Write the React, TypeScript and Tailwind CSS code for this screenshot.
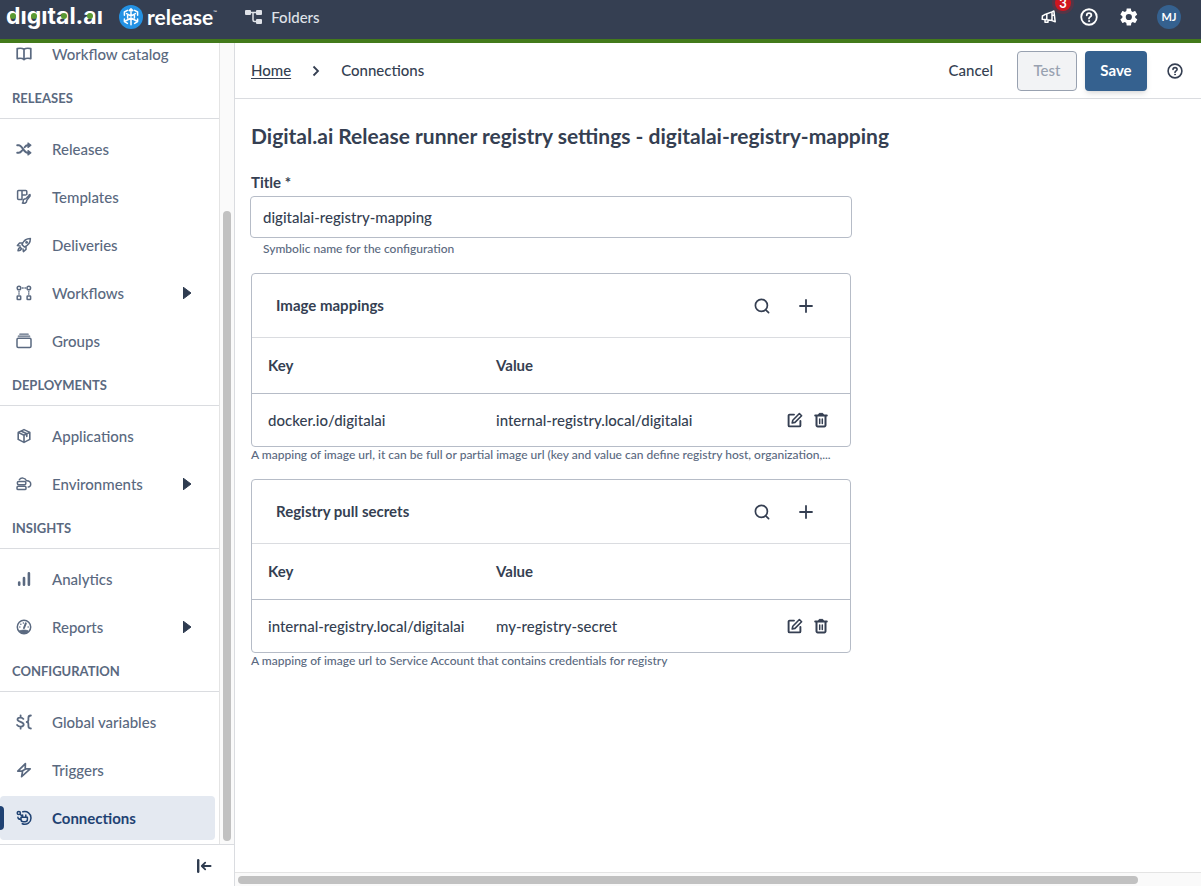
import { useState } from 'react'
import type { ReactNode } from 'react'

interface NavItem {
  label: string
  icon: ReactNode
  expandable?: boolean
  active?: boolean
}

interface NavSection {
  title?: string
  items: NavItem[]
}

interface MappingRow {
  key: string
  value: string
}

function Icon({ children, size = 'h-4 w-4' }: { children: ReactNode; size?: string }) {
  return (
    <svg
      viewBox="0 0 16 16"
      className={`${size} shrink-0`}
      fill="none"
      stroke="currentColor"
      strokeWidth="1.5"
      strokeLinejoin="round"
      strokeLinecap="round"
      aria-hidden="true"
    >
      {children}
    </svg>
  )
}

const NAV: NavSection[] = [
  {
    items: [
      {
        label: 'Workflow catalog',
        icon: (
          <Icon>
            <path strokeWidth="1.7" d="M8 3.3C6.5 2.2 3.5 2.1 1.2 2.6v10c2.3-.5 5.3-.4 6.8.9 1.5-1.3 4.5-1.4 6.8-.9v-10C12.500 2.100 9.500 2.200 8 3.300zM8 3.300v10" />
          </Icon>
        ),
      },
    ],
  },
  {
    title: 'RELEASES',
    items: [
      {
        label: 'Releases',
        icon: (
          <Icon>
            <path strokeWidth="1.900" d="M1.200 4.200h1.600C6 4.200 8 11.800 11.400 11.800h2M1.200 11.800h1.600c1.200 0 2.200-.9 3.200-2.200M8.600 6.200c.9-1.200 1.800-2 2.800-2h2" />
            <path fill="currentColor" strokeWidth="1.200" d="M12 2v4.400l2.900-2.200zM12 9.600v4.400l2.900-2.200z" />
          </Icon>
        ),
      },
      {
        label: 'Templates',
        icon: (
          <Icon>
            <path d="M5.800 10.600H2.600a1 1 0 0 1-1-1V2.600a1 1 0 0 1 1-1h7.200a1 1 0 0 1 1 1v2.800M6 1.600v9M6 6h3.500" />
            <path d="M14 5.600 9.800 9.800M13.200 5.900l1 1-3.400 4.500M9.600 9.800c-1.800 0-2.600 1-2.400 2.400.1.800-.2 1.400-.8 1.800 2 .7 4.400.1 4.400-2.400" />
          </Icon>
        ),
      },
      {
        label: 'Deliveries',
        icon: (
          <Icon>
            <path d="M6 7.600C7.600 3.600 10.400 1.600 14.400 1.600c0 4-2 6.800-6 8.400zM6 7.600 8.400 10M6.400 6H3.600L1.400 8.600l2.700.3M10 9.600v2.800l-2.600 2.200-.4-2.700M4.200 10.400c-1.400.2-2 1.400-2.200 3.400 2-.2 3.200-.8 3.400-2.200z" />
            <circle cx="10.600" cy="5.400" r=".7" />
          </Icon>
        ),
      },
      {
        label: 'Workflows',
        expandable: true,
        icon: (
          <Icon>
            <circle cx="3" cy="3" r="1.800" />
            <circle cx="12.800" cy="3" r="1.800" />
            <rect x="1.200" y="11" width="3.500" height="3.500" rx=".6" />
            <rect x="11.100" y="11" width="3.500" height="3.500" rx=".6" />
            <path strokeWidth="1.300" d="M6.400 3h.8M8.900 3h.6M3 6.400v.8M3 8.600v.7M12.800 6.400v.8M12.800 8.600v.7" />
          </Icon>
        ),
      },
      {
        label: 'Groups',
        icon: (
          <Icon>
            <rect x="1" y="5.300" width="14" height="9.200" rx="1.200" />
            <path strokeWidth="1.200" d="M2.300 3.200h11.400M3.800 1.200h8.400" />
          </Icon>
        ),
      },
    ],
  },
  {
    title: 'DEPLOYMENTS',
    items: [
      {
        label: 'Applications',
        icon: (
          <Icon>
            <path strokeWidth="1.600" d="M8 1.600 13.800 4.400v7L8 14.400l-5.800-3v-7zM2.200 4.400 8 7.200l5.800-2.800M8 7.200v7.200M5 3 10.800 5.800v2.600" />
          </Icon>
        ),
      },
      {
        label: 'Environments',
        expandable: true,
        icon: (
          <Icon>
            <rect x="1.400" y="5.400" width="8.400" height="3.300" rx="1.200" />
            <rect x="1" y="10.300" width="9" height="3.300" rx="1.200" />
            <path d="M3.400 3.600C4.800 1.400 9.400 1.500 10.400 4.700c3-.2 4.600 1.700 4.300 3.800-.2 1.700-1.100 2.500-2.500 2.500" />
          </Icon>
        ),
      },
    ],
  },
  {
    title: 'INSIGHTS',
    items: [
      {
        label: 'Analytics',
        icon: (
          <Icon>
            <path strokeWidth="2.600" d="M3.200 11.600v2.200M8 7v6.800M12.900 2.200v11.600" />
          </Icon>
        ),
      },
      {
        label: 'Reports',
        expandable: true,
        icon: (
          <Icon>
            <circle cx="8" cy="8" r="6.700" />
            <path fill="currentColor" strokeWidth="1" d="M3.600 12c2.700-1.200 6.100-1.200 8.800 0-2 3-6.600 3-8.800 0z" />
            <path d="M8 9 9.800 4.400" strokeWidth="2" />
            <path strokeWidth="1.400" d="M3.800 8h.1M4.800 5.300h.1M7.300 4h.1M12.100 8h.1" />
          </Icon>
        ),
      },
    ],
  },
  {
    title: 'CONFIGURATION',
    items: [
      {
        label: 'Global variables',
        icon: (
          <Icon>
            <path strokeWidth="1.800" d="M7.400 4.900C6.200 3 1.500 3 1.500 5.500S7.700 7.900 7.700 10.500 2.700 13.200 1.100 11M4.600 1.300v2M4.600 12.700v2M14.900 1.500c-1.900 0-2.500.7-2.500 2.400v1.900c0 1.400-.5 2.200-1.700 2.200 1.200 0 1.700.8 1.700 2.200v1.900c0 1.700.6 2.400 2.500 2.400" />
          </Icon>
        ),
      },
      {
        label: 'Triggers',
        icon: (
          <Icon>
            <path strokeWidth="1.700" d="M9.400 1.600 1.800 9.200h4.800l-1 5.400 8.600-7.800H9.200zM10.200 6.800 5.600 9.200" />
          </Icon>
        ),
      },
      {
        label: 'Connections',
        active: true,
        icon: (
          <Icon>
            <circle cx="2.800" cy="3" r="1.600" />
            <path d="M6.800 1.800C11.200.6 15 3.600 15 7.900s-4 7.600-8.800 5.900M4.200 4.300l1.600 1.600M1.900 7.200c0 1 .4 1.700 1.400 1.900" />
            <path d="M5 7.300h6.400v2.200c0 1.300-1 2.200-2.200 2.200H7.100C5.900 11.700 5 10.800 5 9.500zM6.600 7V4.900M9.800 7V4.900M5 9.300H3.200" />
          </Icon>
        ),
      },
    ],
  },
]

const IMAGE_MAPPINGS: MappingRow[] = [
  { key: 'docker.io/digitalai', value: 'internal-registry.local/digitalai' },
]

const PULL_SECRETS: MappingRow[] = [
  { key: 'internal-registry.local/digitalai', value: 'my-registry-secret' },
]

function HelpIcon({ size }: { size: string }) {
  return (
    <Icon size={size}>
      <circle cx="8" cy="8" r="6.900" strokeWidth="1.600" />
      <path strokeWidth="1.600" d="M6 6.500c0-2.600 4.100-2.500 4.100-.1C10.100 7.900 8 7.900 8 9.400" />
      <circle cx="8" cy="11.600" r=".5" fill="currentColor" strokeWidth=".8" />
    </Icon>
  )
}

function Logo() {
  return (
    <a href="#home" className="flex items-center text-white">
      <svg viewBox="0 0 112 34" className="h-[34px] w-28 overflow-visible" role="img" aria-label="digital.ai">
        <text
          x="6"
          y="24"
          fill="currentColor"
          className="font-['Inter',sans-serif] text-[23px] font-bold"
        >
          dıgıtal.aı
        </text>
        <g fill="#5b9a32">
          <circle cx="13" cy="16" r="3" />
          <circle cx="34" cy="16" r="3" />
          <circle cx="64" cy="16" r="3" />
          <circle cx="90" cy="16" r="3" />
        </g>
      </svg>
      <svg viewBox="0 0 24 24" className="ml-[7px] h-6 w-6" aria-hidden="true">
        <circle cx="12" cy="12" r="12" fill="#2492e4" />
        <g fill="none" stroke="#fff" strokeWidth="1.500" strokeLinejoin="round" strokeLinecap="round">
          <path d="M8.400 5.400 5.400 7v3.200M15.600 5.400l3 1.600v3.200M5.400 14v2.600l3 1.800M18.600 14v2.600l-3 1.800" />
          <path d="M12 4v6.500M10.200 5.600 12 3.900l1.800 1.700M12 13v6.800M12 13l-5.600 3M12 13l5.600 3M7.600 8.600 12 11l4.400-2.400M8.600 13V9.200M15.400 13V9.200" />
        </g>
      </svg>
      <span className="ml-1 text-[21px] font-bold">release</span>
      <span className="mb-2 w-2 text-[5px]">™</span>
    </a>
  )
}

function TopBar() {
  return (
    <header className="flex h-[43px] shrink-0 items-start justify-between border-b-4 border-[#437a1b] bg-[#353f52]">
      <div className="flex h-[34px] items-center">
        <Logo />
        <a href="#folders" className="ml-6 flex items-center gap-2 text-[15px] font-medium text-[#dfe2e8]">
          <svg viewBox="0 0 18 18" className="h-[18px] w-[18px]" aria-hidden="true">
            <g fill="currentColor">
              <rect x="0" y="2" width="6" height="5" rx="1" />
              <rect x="11" y="2" width="6" height="5" rx="1" />
              <rect x="11" y="11" width="6" height="5" rx="1" />
            </g>
            <path d="M6 4.500h5M8 4.500v7.500q0 1.500 1.500 1.500H11" fill="none" stroke="currentColor" strokeWidth="1.500" />
          </svg>
          Folders
        </a>
      </div>
      <div className="flex h-[34px] items-center gap-4 pr-5 text-white">
        <button type="button" aria-label="Announcements" className="relative flex h-6 w-6 items-center justify-center">
          <Icon>
            <path d="M1.400 7 3.400 5.800 11 2.900v8.700L4 10.600 1.200 10.200zM4 10.800v2.400h3v-1.900M12.900 2l1.300 10.800M11 2.900l1.900-.9M11 11.600l3.200 1.200M5.800 5.200v5.400M11.600 6.200l1.200-.2" />
          </Icon>
          <span className="absolute -top-[10px] left-[18px] flex h-4 w-4 items-center justify-center rounded-full bg-[#d0161f] text-[13px] leading-4 font-bold ring-3 ring-[#d0161f]/20">
            3
          </span>
        </button>
        <button type="button" aria-label="Help" className="flex h-6 w-6 items-center justify-center">
          <HelpIcon size="h-[18px] w-[18px]" />
        </button>
        <button type="button" aria-label="Settings" className="flex h-6 w-6 items-center justify-center">
          <svg viewBox="0 0 24 24" className="h-5 w-5" fill="currentColor" aria-hidden="true">
            <path d="M19.400 13c.1-.3.100-.7.100-1s0-.7-.1-1l2.200-1.700c.2-.1.200-.4.100-.6l-2.100-3.600c-.1-.2-.4-.3-.6-.2l-2.600 1c-.5-.4-1.100-.7-1.700-1l-.4-2.700c0-.2-.2-.4-.5-.4H9.700c-.3 0-.5.200-.5.400l-.4 2.700c-.6.300-1.200.6-1.700 1l-2.600-1c-.2-.1-.5 0-.6.2L1.800 8.700c-.1.200-.1.500.1.600L4.100 11c0 .3-.1.700-.1 1s0 .7.100 1l-2.200 1.700c-.2.100-.2.400-.1.600l2.100 3.600c.1.200.4.300.6.200l2.600-1c.5.400 1.100.7 1.700 1l.4 2.700c0 .2.200.4.500.4h4.200c.3 0 .5-.2.500-.4l.4-2.700c.6-.3 1.200-.6 1.700-1l2.600 1c.2.100.5 0 .6-.2l2.100-3.600c.1-.2.1-.5-.1-.6zM11.800 15.700a3.700 3.700 0 1 1 0-7.400 3.700 3.700 0 0 1 0 7.400z" />
          </svg>
        </button>
        <button type="button" className="flex h-6 w-6 items-center justify-center rounded-full bg-[#35618f] text-[11px] font-bold">
          MJ
        </button>
      </div>
    </header>
  )
}

function Sidebar() {
  return (
    <aside className="flex w-[235px] shrink-0 flex-col border-r border-[#dadce0]">
      <div className="flex min-h-0 flex-1">
        <nav className="flex min-w-0 flex-1 flex-col justify-end overflow-hidden pb-1 text-[#5a6980]">
          {NAV.map((section) => (
            <div key={section.title ?? 'top'}>
              {section.title && (
                <h2 className="flex h-[43px] items-center border-b border-[#dadce0] px-3 pt-[3px] text-[13px] font-bold">
                  {section.title}
                </h2>
              )}
              <ul className={`flex flex-col gap-1 ${section.title ? 'pt-2' : ''}`}>
                {section.items.map((item) => (
                  <li key={item.label}>
                    <a
                      href="#nav"
                      aria-current={item.active ? 'page' : undefined}
                      className={`relative mr-1 flex h-11 items-center rounded pl-4 text-[15px] ${
                        item.active ? 'bg-[#e4e9f1] font-bold text-[#1f4273]' : 'font-medium'
                      }`}
                    >
                      {item.active && (
                        <span className="absolute top-[10px] left-0 h-6 w-1 rounded-r bg-[#1f4273]" />
                      )}
                      {item.icon}
                      <span className="ml-5 flex-1">{item.label}</span>
                      {item.expandable && (
                        <svg viewBox="0 0 8 12" className="mr-6 h-3 w-2 text-[#2f3c50]" aria-hidden="true">
                          <path d="M0 0 8 6 0 12z" fill="currentColor" stroke="currentColor" strokeLinejoin="round" />
                        </svg>
                      )}
                    </a>
                  </li>
                ))}
              </ul>
            </div>
          ))}
        </nav>
        <div className="flex w-[15px] flex-col items-center justify-end border-l border-[#e4e4e4] bg-[#fafafa] pb-[3px]">
          <div className="h-[79%] w-2 rounded-full bg-[#c1c1c1]" />
        </div>
      </div>
      <div className="flex h-[42px] items-center justify-end border-t border-[#dadce0] pr-[22px] text-[#2f3c50]">
        <button type="button" aria-label="Collapse menu">
          <Icon>
            <path strokeWidth="2.400" d="M2.200 2.200v11.600" />
            <path strokeWidth="1.800" d="M14.600 8H6M9.200 4.600 5.800 8l3.400 3.400" />
          </Icon>
        </button>
      </div>
    </aside>
  )
}

function MappingTable({ title, rows, hint }: { title: string; rows: MappingRow[]; hint: string }) {
  return (
    <section className="mx-px">
      <div className="rounded border border-[#b6bcc7]">
        <div className="flex h-16 items-center justify-between border-b border-[#dadce0] pr-8 pl-6">
          <h2 className="text-[15px] font-bold">{title}</h2>
          <div className="flex gap-5">
            <button type="button" aria-label="Search" className="flex h-6 w-6 items-center justify-center">
              <Icon>
                <circle cx="7.400" cy="7.400" r="6" strokeWidth="1.700" />
                <path d="M12 12.200l2.600 2.400" strokeWidth="1.700" />
              </Icon>
            </button>
            <button type="button" aria-label="Add" className="flex h-6 w-6 items-center justify-center">
              <Icon>
                <path d="M8 2v12M2 8h12" strokeWidth="1.800" />
              </Icon>
            </button>
          </div>
        </div>
        <table className="w-full table-fixed text-left text-[15px]">
          <thead>
            <tr className="h-[55px] border-b border-[#b6bcc7]">
              <th className="w-[228px] px-4 font-bold">Key</th>
              <th className="px-4 font-bold">Value</th>
              <th className="w-20" aria-label="Actions" />
            </tr>
          </thead>
          <tbody>
            {rows.map((row) => (
              <tr key={row.key} className="h-[53px] font-medium">
                <td className="pl-4 whitespace-nowrap">{row.key}</td>
                <td className="px-4">{row.value}</td>
                <td>
                  <div className="flex gap-[10px] pl-[17px]">
                    <button type="button" aria-label="Edit">
                      <Icon>
                        <path strokeWidth="1.900" d="M7 2.600H2.600a1 1 0 0 0-1 1v9.800a1 1 0 0 0 1 1h9.800a1 1 0 0 0 1-1V9" />
                        <path strokeWidth="1.600" d="M12.400 1.500 14.600 3.700 8 10.400l-2.800.6.600-2.800z" />
                      </Icon>
                    </button>
                    <button type="button" aria-label="Delete">
                      <Icon>
                        <path strokeWidth="2" d="M2.200 3.400h11.600M3.500 4v9.200a1.200 1.200 0 0 0 1.200 1.200h6.600a1.200 1.200 0 0 0 1.200-1.200V4" />
                        <path strokeWidth="1" fill="currentColor" d="M5.400 3.200 6.200 1.400h3.600l.8 1.800z" />
                        <path strokeWidth="1.500" d="M6.700 7v4.400M9.300 7v4.400" />
                      </Icon>
                    </button>
                  </div>
                </td>
              </tr>
            ))}
          </tbody>
        </table>
      </div>
      <p className="text-xs leading-4 font-medium text-[#5a6980]">{hint}</p>
    </section>
  )
}

export default function App() {
  const [title, setTitle] = useState('digitalai-registry-mapping')

  return (
    <div className="flex h-screen flex-col overflow-hidden bg-white font-['Lato',sans-serif] text-[#353f52]">
      <TopBar />
      <div className="flex min-h-0 flex-1">
        <Sidebar />
        <main className="flex min-w-0 flex-1 flex-col">
          {/* Toolbar */}
          <div className="flex h-14 shrink-0 items-center justify-between border-b border-[#dadce0] pr-[14px] pl-4 text-[15px] font-medium">
            <nav aria-label="Breadcrumb" className="flex items-center">
              <a href="#home" className="underline underline-offset-2">Home</a>
              <svg viewBox="0 0 8 12" className="mx-[21px] h-3 w-2" aria-hidden="true">
                <path d="M1.500 1.500 6 6l-4.500 4.500" fill="none" stroke="currentColor" strokeWidth="1.800" />
              </svg>
              <span>Connections</span>
            </nav>
            <div className="flex items-center gap-2">
              <button type="button" className="mr-4 h-10">Cancel</button>
              <button
                type="button"
                disabled
                className="h-10 w-[60px] rounded border border-[#98a1b0] bg-[#f2f3f5] text-[#98a1b0]"
              >
                Test
              </button>
              <button type="button" className="h-10 w-[62px] rounded bg-[#35618f] font-bold text-white shadow-md">
                Save
              </button>
              <button type="button" aria-label="Page help" className="ml-2 flex h-6 w-6 items-center justify-center">
                <HelpIcon size="h-4 w-4" />
              </button>
            </div>
          </div>

          {/* Form */}
          <div className="min-h-0 flex-1 overflow-hidden px-[15px] pt-6">
            <h1 className="mx-px text-[21px] leading-[26px] font-bold">
              Digital.ai Release runner registry settings - digitalai-registry-mapping
            </h1>
            <form className="mt-[23px] flex max-w-[602px] flex-col">
              <label htmlFor="title" className="mx-px text-[15px] leading-5 font-bold">
                Title *
              </label>
              <input
                id="title"
                value={title}
                onChange={(e) => setTitle(e.target.value)}
                className="mt-1 h-[42px] rounded border border-[#b6bcc7] px-3 text-[15px] font-medium"
              />
              <p className="mt-[3px] mb-4 px-[13px] text-xs leading-4 font-medium text-[#5a6980]">
                Symbolic name for the configuration
              </p>
              <div className="flex flex-col gap-4">
                <MappingTable
                  title="Image mappings"
                  rows={IMAGE_MAPPINGS}
                  hint="A mapping of image url, it can be full or partial image url (key and value can define registry host, organization,..."
                />
                <MappingTable
                  title="Registry pull secrets"
                  rows={PULL_SECRETS}
                  hint="A mapping of image url to Service Account that contains credentials for registry"
                />
              </div>
            </form>
          </div>

          {/* Horizontal scroll track */}
          <div className="flex h-[14px] shrink-0 items-center border-t border-[#e4e4e4] bg-[#fafafa] px-[3px]">
            <div className="h-2 w-15/16 rounded-full bg-[#c1c1c1]" />
          </div>
        </main>
      </div>
    </div>
  )
}
